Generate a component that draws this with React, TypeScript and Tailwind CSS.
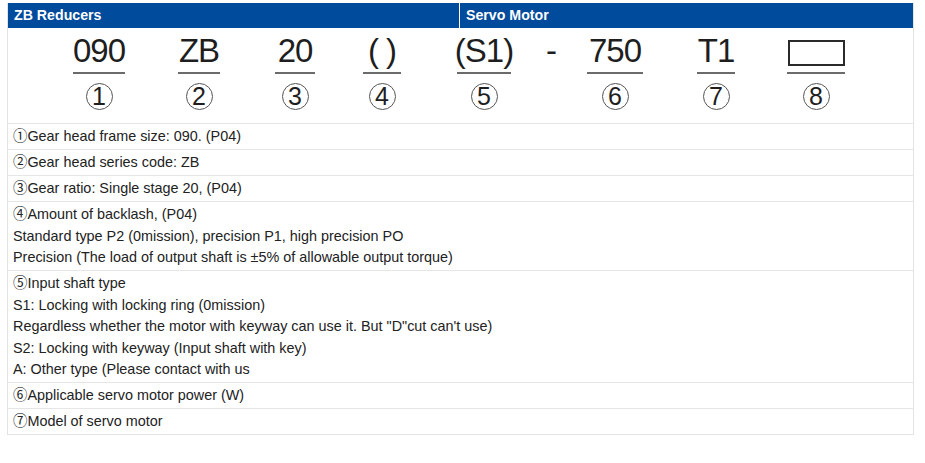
const codeItems = [
  { key: "1", text: "090", width: 52, ml: 65, n: "1" },
  { key: "2", text: "ZB", width: 42, ml: 53, n: "2" },
  { key: "3", text: "20", width: 40, ml: 55, n: "3" },
  { key: "4", text: "( )", width: 38, ml: 48, n: "4" },
  { key: "5", text: "(S1)", width: 54, ml: 56, n: "5" },
  { key: "dash", text: "-", width: 20, ml: 30, n: "" },
  { key: "6", text: "750", width: 56, ml: 26, n: "6" },
  { key: "7", text: "T1", width: 38, ml: 54, n: "7" },
  { key: "8", text: "", width: 58, ml: 52, n: "8" },
];

const rows: string[][] = [
  ["①Gear head frame size: 090. (P04)"],
  ["②Gear head series code: ZB"],
  ["③Gear ratio: Single stage 20, (P04)"],
  [
    "④Amount of backlash, (P04)",
    "Standard type P2 (0mission), precision P1, high precision PO",
    "Precision (The load of output shaft is ±5% of allowable output torque)",
  ],
  [
    "⑤Input shaft type",
    "S1: Locking with locking ring (0mission)",
    'Regardless whether the motor with keyway can use it. But "D"cut can\'t use)',
    "S2: Locking with keyway (Input shaft with key)",
    "A: Other type (Please contact with us",
  ],
  ["⑥Applicable servo motor power (W)"],
  ["⑦Model of servo motor"],
];

const App = () => {
  return (
    <div
      className="min-h-screen bg-white pl-[7px] pt-[3px]"
      style={{ fontFamily: '"Liberation Sans", Arial, "Noto Sans CJK SC", sans-serif' }}
    >
      <div className="w-[907px] border-x border-b border-[#e3e3e3]">
        {/* header bar */}
        <div className="flex h-[25px] bg-[#004b9c] text-[14.2px] font-bold leading-[25px] text-white">
          <div className="w-[452px] border-r border-white pl-[6px]">ZB Reducers</div>
          <div className="flex-1 pl-[6px]">Servo Motor</div>
        </div>

        {/* model code figure */}
        <div className="flex h-[95px] items-start pt-[7px] text-[#1e1e1e]">
          {codeItems.map((item) => (
            <div
              key={item.key}
              className="flex shrink-0 flex-col items-center"
              style={{ width: item.width, marginLeft: item.ml }}
            >
              <div className="flex h-[32px] items-center justify-center text-[33px] leading-[32px] tracking-[-1px]">
                {item.key === "8" ? (
                  <div className="mt-[4px] h-[26px] w-[57px] border-2 border-[#2a2a2a]" />
                ) : (
                  item.text
                )}
              </div>
              {item.n && (
                <>
                  <div className="mt-[5px] h-[2px] w-full bg-[#6b6b6b]" />
                  <div className="mt-[9px] flex h-[27px] w-[27px] items-center justify-center rounded-full border border-[#555] text-[25px] leading-none">
                    {item.n}
                  </div>
                </>
              )}
            </div>
          ))}
        </div>

        {/* description rows */}
        {rows.map((lines, i) => (
          <div
            key={i}
            className="border-t border-[#e6e6e6] px-[5px] pt-[2px] pb-[1.5px] text-[14.4px] leading-[21.5px] text-[#222]"
          >
            {lines.map((line, j) => (
              <div key={j}>{line}</div>
            ))}
          </div>
        ))}
      </div>
    </div>
  );
};

export default App;
